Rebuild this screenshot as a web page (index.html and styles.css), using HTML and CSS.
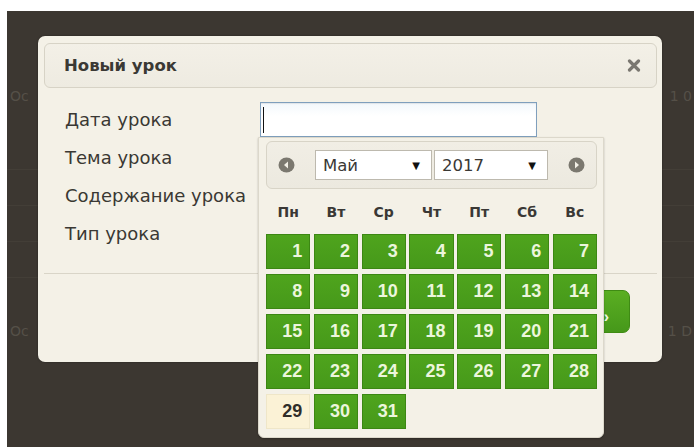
FILE: index.html
```html
<!DOCTYPE html>
<html lang="ru">
<head>
<meta charset="utf-8">
<title>Новый урок</title>
<link rel="stylesheet" href="styles.css">
</head>
<body>
<div class="screen">
  <!-- page content dimmed behind the modal -->
  <div class="page">
    <div class="page-row page-row--first"><span>Ос</span><span>1 0</span></div>
    <div class="page-line"></div>
    <div class="page-line"></div>
    <div class="page-line"></div>
    <div class="page-line"></div>
    <div class="page-row"><span>Ос</span><span>1 D</span></div>
  </div>

  <div class="dialog">
    <div class="dialog-head">
      <span class="dialog-title">Новый урок</span>
      <svg class="dialog-close" width="14" height="13" viewBox="0 0 14 13" aria-label="Закрыть">
        <path d="M2.5 2 L11.5 11 M11.5 2 L2.5 11" stroke="#7a7770" stroke-width="3.2" stroke-linecap="round"/>
      </svg>
    </div>

    <div class="form">
      <div class="form-row">
        <label class="form-label">Дата урока</label>
        <div class="field field--focus"><span class="caret"></span></div>
      </div>
      <div class="form-row">
        <label class="form-label">Тема урока</label>
        <div class="field"></div>
      </div>
      <div class="form-row">
        <label class="form-label">Содержание урока</label>
        <div class="field"></div>
      </div>
      <div class="form-row">
        <label class="form-label">Тип урока</label>
        <div class="field"></div>
      </div>
    </div>

    <div class="dialog-foot">
      <button class="btn-save" aria-label="Сохранить">›</button>
    </div>

    <!-- date picker dropdown under the date field -->
    <div class="picker">
      <div class="picker-head">
        <span class="picker-nav">
          <svg width="17" height="16" viewBox="0 0 17 16"><ellipse cx="8.5" cy="8" rx="8" ry="7.5" fill="#7b786f"/><path d="M10 4.6 L6 8 L10 11.4 Z" fill="#f2efe6"/></svg>
        </span>
        <div class="picker-select picker-select--month"><span>Май</span><span class="arrow">▼</span></div>
        <div class="picker-select picker-select--year"><span>2017</span><span class="arrow">▼</span></div>
        <span class="picker-nav">
          <svg width="17" height="16" viewBox="0 0 17 16"><ellipse cx="8.5" cy="8" rx="8" ry="7.5" fill="#7b786f"/><path d="M7 4.6 L11 8 L7 11.4 Z" fill="#f2efe6"/></svg>
        </span>
      </div>
      <div class="picker-dow">
        <span>Пн</span><span>Вт</span><span>Ср</span><span>Чт</span><span>Пт</span><span>Сб</span><span>Вс</span>
      </div>
      <div class="picker-days">
        <a class="day">1</a><a class="day">2</a><a class="day">3</a><a class="day">4</a><a class="day">5</a><a class="day">6</a><a class="day">7</a>
        <a class="day">8</a><a class="day">9</a><a class="day">10</a><a class="day">11</a><a class="day">12</a><a class="day">13</a><a class="day">14</a>
        <a class="day">15</a><a class="day">16</a><a class="day">17</a><a class="day">18</a><a class="day">19</a><a class="day">20</a><a class="day">21</a>
        <a class="day">22</a><a class="day">23</a><a class="day">24</a><a class="day">25</a><a class="day">26</a><a class="day">27</a><a class="day">28</a>
        <a class="day day--today">29</a><a class="day">30</a><a class="day">31</a>
      </div>
    </div>
  </div>
</div>
</body>
</html>
```

FILE: styles.css
```css
* { box-sizing: border-box; }

html, body {
  margin: 0;
  height: 100%;
  background: #ffffff;
}

body {
  padding: 11px 0 0 7px;
  font-family: "DejaVu Sans", "Liberation Sans", sans-serif;
  color: #333;
  overflow: hidden;
}

.screen {
  position: relative;
  height: 436px;
  background: #3c3731;
}

/* dimmed page behind the overlay */
.page {
  padding-top: 78px;
  color: #555048;
  font-size: 14px;
}
.page-row {
  display: flex;
  justify-content: space-between;
  height: 14px;
  line-height: 14px;
  padding: 0 2px 0 3px;
}
.page-row--first { margin-bottom: 31px; }
.page-line {
  height: 36px;
  border-bottom: 1px solid #433e37;
}
.page-line:nth-of-type(5) { margin-bottom: 46px; }

/* modal dialog */
.dialog {
  position: absolute;
  left: 31px;
  top: 25px;
  width: 624px;
  height: 326px;
  padding: 7px 5px 0 6px;
  background: #f4f1e7;
  border-radius: 7px;
  box-shadow: 0 0 2px rgba(0, 0, 0, 0.4);
}

.dialog-head {
  display: flex;
  align-items: center;
  justify-content: space-between;
  height: 45px;
  padding: 0 15px 0 19px;
  border: 1px solid #d7d3c6;
  border-radius: 6px;
  background: linear-gradient(#f3f0e7, #eeebe1);
}
.dialog-title {
  font-size: 16.5px;
  font-weight: bold;
  color: #3b3934;
}
.dialog-close { display: block; }

.form {
  margin-top: 14px;
  padding-left: 21px;
}
.form-row {
  display: flex;
  align-items: center;
  height: 35px;
  margin-bottom: 3px;
}
.form-label {
  width: 195px;
  font-size: 18px;
  color: #3a3833;
}
.field {
  position: relative;
  width: 277px;
  height: 35px;
  background: #fff;
  border: 1px solid #b9b5aa;
}
.field--focus {
  border-color: #7f9fbd;
  background: linear-gradient(#f3f8fc, #ffffff 40%);
  box-shadow: inset 0 1px 1px rgba(0, 0, 0, 0.08);
}
.caret {
  position: absolute;
  left: 2px;
  top: 4px;
  width: 1px;
  height: 26px;
  background: #111;
}

.dialog-foot {
  display: flex;
  justify-content: flex-end;
  margin-top: 22px;
  padding: 16px 27px 0 0;
  border-top: 1px solid #d9d5c8;
}
.btn-save {
  width: 120px;
  height: 43px;
  padding: 10px 20px 0 0;
  text-align: right;
  border: 1px solid #3f8b14;
  border-radius: 7px;
  background: linear-gradient(#5aae22, #46981a);
  color: #eef7e2;
  font: bold 16px "Liberation Sans", Arial, sans-serif;
}

/* date picker */
.picker {
  position: absolute;
  left: 220px;
  top: 101px;
  width: 346px;
  height: 301px;
  padding: 3px 6px 8px 7px;
  background: #f4f1e7;
  border: 1px solid #dcd8cb;
  border-radius: 0 0 6px 6px;
  box-shadow: 0 1px 2px rgba(0, 0, 0, 0.25);
}

.picker-head {
  display: flex;
  align-items: center;
  height: 48px;
  border: 1px solid #d8d4c7;
  border-radius: 6px;
  background: linear-gradient(#f1eee5, #ece9df);
}
.picker-nav {
  display: flex;
  justify-content: center;
  width: 39px;
}
.picker-nav svg { display: block; }
.picker-select {
  display: flex;
  align-items: center;
  justify-content: space-between;
  height: 30px;
  padding: 0 11px 0 7px;
  background: #fff;
  border: 1px solid #bdb9ae;
  font-size: 16.5px;
  color: #3a3835;
}
.picker-select--month { width: 117px; margin-left: 9px; }
.picker-select--year { width: 114px; margin: 0 9px 0 2px; }
.arrow {
  font-size: 10px;
  color: #111;
}

.picker-dow {
  display: grid;
  grid-template-columns: repeat(7, 1fr);
  column-gap: 3.5px;
  align-items: center;
  height: 45px;
  text-align: center;
  font-size: 14px;
  font-weight: bold;
  color: #3a3835;
}

.picker-days {
  display: grid;
  grid-template-columns: repeat(7, 1fr);
  column-gap: 3.5px;
  row-gap: 5px;
}
.day {
  display: block;
  height: 35px;
  padding-right: 7px;
  text-align: right;
  font: bold 18px "Liberation Sans", Arial, sans-serif;
  line-height: 33px;
  color: #ecf6dc;
  background: linear-gradient(#4fa41d, #46991a);
  border: 1px solid #3c8713;
}
.day--today {
  color: #2f2d29;
  background: #fbf2d6;
  border-color: #efe6c8;
}
```
